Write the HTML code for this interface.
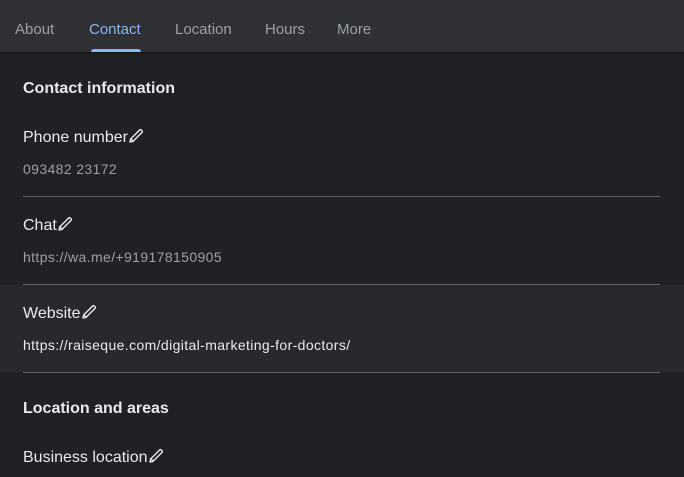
<!DOCTYPE html>
<html><head><style>
body{margin:0;width:684px;height:477px;background:#202124;font-family:"Liberation Sans",Arial,sans-serif;overflow:hidden;position:relative;color:#e8eaed}
.hd{position:absolute;left:0;top:0;width:684px;height:52px;background:#303134;box-shadow:0 1px 2px rgba(0,0,0,.4)}
.tab{position:absolute;top:21px;font-size:15px;color:#9aa0a6;}
.ul{position:absolute;left:91px;top:49px;width:50px;height:3px;background:#8ab4f8;border-radius:3px 3px 0 0}
.t{position:absolute;left:23px;white-space:nowrap}
.h{font-size:16px;font-weight:bold}
.l{font-size:16px}
.v{font-size:14px;color:#9aa0a6;letter-spacing:.38px}
.d{position:absolute;left:23px;width:637px;height:1px;background:#5f6368}
svg{vertical-align:-2px;margin-left:0}
</style></head><body>
<div class="hd">
<span class="tab" style="left:15px">About</span>
<span class="tab" style="left:89px;color:#8ab4f8">Contact</span>
<span class="tab" style="left:175px">Location</span>
<span class="tab" style="left:265px">Hours</span>
<span class="tab" style="left:337px">More</span>
<div class="ul"></div>
</div>
<div class="t h" style="top:80px">Contact information</div>
<div class="t l" style="top:128px">Phone number<svg width="16" height="16" viewBox="0 0 16 16"><path d="M2 14 L2.6 11 L11.5 2.1 Q12.5 1.2 13.5 2.2 L13.8 2.5 Q14.8 3.5 13.9 4.5 L5 13.4 Z M3.3 11.2 L4.8 12.7" fill="none" stroke="#e8eaed" stroke-width="1.4" stroke-linejoin="round"/></svg></div>
<div class="t v" style="top:161px">093482 23172</div>
<div class="d" style="top:196px"></div>
<div class="t l" style="top:216px">Chat<svg width="16" height="16" viewBox="0 0 16 16"><path d="M2 14 L2.6 11 L11.5 2.1 Q12.5 1.2 13.5 2.2 L13.8 2.5 Q14.8 3.5 13.9 4.5 L5 13.4 Z M3.3 11.2 L4.8 12.7" fill="none" stroke="#e8eaed" stroke-width="1.4" stroke-linejoin="round"/></svg></div>
<div class="t v" style="top:249px">https://wa.me/+919178150905</div>
<div class="d" style="top:284px"></div>
<div style="position:absolute;left:0;top:285px;width:684px;height:87px;background:#28292c"></div>
<div class="t l" style="top:304px">Website<svg width="16" height="16" viewBox="0 0 16 16"><path d="M2 14 L2.6 11 L11.5 2.1 Q12.5 1.2 13.5 2.2 L13.8 2.5 Q14.8 3.5 13.9 4.5 L5 13.4 Z M3.3 11.2 L4.8 12.7" fill="none" stroke="#e8eaed" stroke-width="1.4" stroke-linejoin="round"/></svg></div>
<div class="t v" style="top:337px;color:#e8eaed">https://raiseque.com/digital-marketing-for-doctors/</div>
<div class="d" style="top:372px"></div>
<div class="t h" style="top:400px">Location and areas</div>
<div class="t l" style="top:448px">Business location<svg width="16" height="16" viewBox="0 0 16 16"><path d="M2 14 L2.6 11 L11.5 2.1 Q12.5 1.2 13.5 2.2 L13.8 2.5 Q14.8 3.5 13.9 4.5 L5 13.4 Z M3.3 11.2 L4.8 12.7" fill="none" stroke="#e8eaed" stroke-width="1.4" stroke-linejoin="round"/></svg></div>
</body></html>
